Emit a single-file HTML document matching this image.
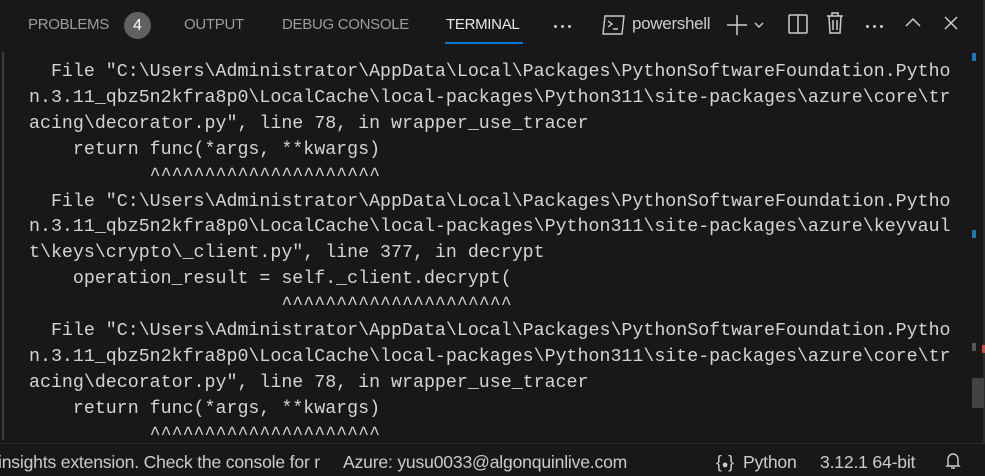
<!DOCTYPE html>
<html><head><meta charset="utf-8"><style>
html,body{margin:0;padding:0;width:985px;height:476px;overflow:hidden;background:#181818;}
body{position:relative;font-family:"Liberation Sans",sans-serif;}
.tab{position:absolute;top:16px;font-size:15px;color:#9d9d9d;letter-spacing:-0.3px}
.badge{position:absolute;left:124px;top:12px;width:27px;height:27px;border-radius:50%;background:#616161;color:#fff;font-size:16px;text-align:center;line-height:27px}
.ul{position:absolute;top:42px;height:2px;background:#0078d4}
pre{position:absolute;left:29px;top:60px;margin:0;font-family:"Liberation Mono",monospace;font-size:18.3px;line-height:25.9px;color:#d4d4d4}
.lb{position:absolute;left:2px;top:52px;width:2px;height:388px;background:#3c3c3c}
.rb{position:absolute;left:983px;top:0;width:2px;height:476px;background:#2b2b2b}
.status{position:absolute;left:0;top:443px;width:985px;height:33px;background:#181818;border-top:1px solid #2b2b2b;font-size:17.6px;color:#cccccc;letter-spacing:-0.2px}
.status span{position:absolute;top:8px;white-space:nowrap}
svg{position:absolute}
.dots{position:absolute;width:3px;height:3px;border-radius:50%;background:#ccc;box-shadow:7px 0 #ccc,14px 0 #ccc}
</style></head><body>
<div class="tab" style="left:28px">PROBLEMS</div>
<div class="badge">4</div>
<div class="tab" style="left:184px">OUTPUT</div>
<div class="tab" style="left:282px">DEBUG CONSOLE</div>
<div class="tab" style="left:446px;color:#e7e7e7">TERMINAL</div>
<div class="ul" style="left:445px;width:78px"></div>
<div class="dots" style="left:554px;top:25px"></div>
<svg style="left:602px;top:13px" width="24" height="24" viewBox="0 0 24 24" fill="none" stroke="#ccc" stroke-width="1.4"><path d="M3 3h19l-2 18H1z"/><path d="M6 8l4 3-4 3M11 16h5"/></svg>
<div class="tab" style="left:632px;color:#ccc;font-size:17px;top:14px">powershell</div>
<svg style="left:726px;top:13px" width="44" height="24" viewBox="0 0 44 24" fill="none" stroke="#ccc" stroke-width="1.5"><path d="M11 2v20M1 12h20"/><path d="M29 10l4 4 4-4"/></svg>
<svg style="left:787px;top:13px" width="22" height="22" viewBox="0 0 22 22" fill="none" stroke="#ccc" stroke-width="1.5"><rect x="2" y="2" width="18" height="18" rx="1"/><path d="M11 2v18"/></svg>
<svg style="left:825px;top:11px" width="20" height="24" viewBox="0 0 20 24" fill="none" stroke="#ccc" stroke-width="1.5"><path d="M2 5h16M7 5V2h6v3M4 5l1 17h10l1-17M8 9v10M12 9v10"/></svg>
<div class="dots" style="left:866px;top:25px"></div>
<svg style="left:903px;top:15px" width="20" height="14" viewBox="0 0 20 14" fill="none" stroke="#ccc" stroke-width="1.5"><path d="M3 11l7-7 7 7"/></svg>
<svg style="left:943px;top:15px" width="16" height="16" viewBox="0 0 16 16" fill="none" stroke="#ccc" stroke-width="1.5"><path d="M2 2l12 12M14 2L2 14"/></svg>
<div class="lb"></div><div class="rb"></div>
<div style="position:absolute;left:972px;top:53px;width:4px;height:8px;background:#1d7ab0"></div>
<div style="position:absolute;left:972px;top:230px;width:4px;height:8px;background:#1d7ab0"></div>
<div style="position:absolute;left:972px;top:343px;width:4px;height:8px;background:#555"></div>
<div style="position:absolute;left:982px;top:345px;width:3px;height:8px;background:#c74e4e"></div>
<div style="position:absolute;left:972px;top:378px;width:12px;height:30px;background:#424242"></div>
<pre>  File "C:\Users\Administrator\AppData\Local\Packages\PythonSoftwareFoundation.Pytho
n.3.11_qbz5n2kfra8p0\LocalCache\local-packages\Python311\site-packages\azure\core\tr
acing\decorator.py", line 78, in wrapper_use_tracer
    return func(*args, **kwargs)
           ^^^^^^^^^^^^^^^^^^^^^
  File "C:\Users\Administrator\AppData\Local\Packages\PythonSoftwareFoundation.Pytho
n.3.11_qbz5n2kfra8p0\LocalCache\local-packages\Python311\site-packages\azure\keyvaul
t\keys\crypto\_client.py", line 377, in decrypt
    operation_result = self._client.decrypt(
                       ^^^^^^^^^^^^^^^^^^^^^
  File "C:\Users\Administrator\AppData\Local\Packages\PythonSoftwareFoundation.Pytho
n.3.11_qbz5n2kfra8p0\LocalCache\local-packages\Python311\site-packages\azure\core\tr
acing\decorator.py", line 78, in wrapper_use_tracer
    return func(*args, **kwargs)
           ^^^^^^^^^^^^^^^^^^^^^</pre>
<div class="status">
<span style="left:-2px">insights extension. Check the console for r</span>
<span style="left:343px">Azure: yusu0033@algonquinlive.com</span>
<span style="left:716px">{<span style="position:static;font-size:11px">&#9679;</span>}</span>
<span style="left:743px">Python</span>
<span style="left:820px">3.12.1 64-bit</span>
<svg style="left:945px;top:8px" width="16" height="18" viewBox="0 0 16 18" fill="none" stroke="#ccc" stroke-width="1.4"><path d="M3 13V7a5 5 0 0110 0v6l1 1H2zM6 16h4"/></svg>
</div>
</body></html>
